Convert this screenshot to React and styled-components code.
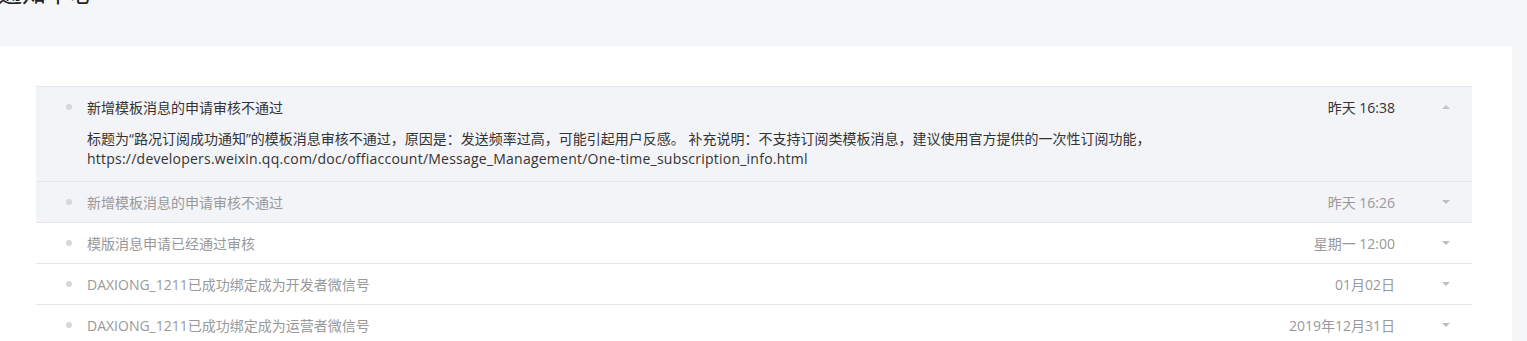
import React from "react";
import styled, { createGlobalStyle } from "styled-components";

const GlobalStyle = createGlobalStyle`
  html, body { margin: 0; padding: 0; background: #f5f6f8; }
  body {
    font-family: "Open Sans", "Noto Sans CJK SC", sans-serif;
    overflow: hidden;
  }
`;

const Page = styled.div`
  width: 1527px;
  height: 341px;
  overflow: hidden;
  box-sizing: border-box;
  padding-right: 15px;
`;

const Title = styled.h1`
  margin: -23px 0 0 -2px;
  height: 69px;
  font-size: 24px;
  line-height: 32px;
  font-weight: 400;
  color: #222;
`;

const Card = styled.div`
  background: #fff;
  padding: 40px 40px 40px 36px;
  min-height: 300px;
`;

const List = styled.ul`
  list-style: none;
  margin: 0;
  padding: 0;
`;

const Item = styled.li`
  border-top: 1px solid #e4e6eb;
  background: ${(p) => (p.$highlight ? "#f3f4f8" : "#fff")};
`;

const Header = styled.div`
  display: flex;
  align-items: center;
  height: 40px;
  padding-left: 30px;
  font-size: 14px;
  color: ${(p) => (p.$open ? "#333" : "#999")};
`;

const Dot = styled.span`
  width: 6px;
  height: 6px;
  border-radius: 50%;
  background: #d8d8d8;
  margin-right: 15px;
  flex: none;
`;

const ItemTitle = styled.span`
  flex: 1;
  white-space: nowrap;
`;

const Time = styled.span`
  margin-right: 25px;
  white-space: nowrap;
`;

const Caret = styled.span`
  width: 52px;
  display: flex;
  justify-content: center;
  align-items: center;
  &::before {
    content: "";
    width: 0;
    height: 0;
    border-left: 4px solid transparent;
    border-right: 4px solid transparent;
    ${(p) =>
      p.$up
        ? "border-bottom: 4px solid #c4c4c4;"
        : "border-top: 4px solid #bdbdbd;"}
  }
`;

const Body = styled.div`
  padding: 2px 40px 12px 87px;
  margin-left: -36px;
  font-size: 14px;
  line-height: 20px;
  color: #333;
`;

const Link = styled.div`
  letter-spacing: 0.23px;
`;

const items = [
  {
    title: "新增模板消息的申请审核不通过",
    time: "昨天 16:38",
    open: true,
    highlight: true,
    text: "标题为“路况订阅成功通知”的模板消息审核不通过，原因是：发送频率过高，可能引起用户反感。 补充说明：不支持订阅类模板消息，建议使用官方提供的一次性订阅功能，",
    url: "https://developers.weixin.qq.com/doc/offiaccount/Message_Management/One-time_subscription_info.html",
  },
  { title: "新增模板消息的申请审核不通过", time: "昨天 16:26", highlight: true },
  { title: "模版消息申请已经通过审核", time: "星期一 12:00" },
  { title: "DAXIONG_1211已成功绑定成为开发者微信号", time: "01月02日" },
  { title: "DAXIONG_1211已成功绑定成为运营者微信号", time: "2019年12月31日" },
];

export default function App() {
  return (
    <Page>
      <GlobalStyle />
      <Title>通知中心</Title>
      <Card>
        <List>
          {items.map((it, i) => (
            <Item key={i} $highlight={it.highlight}>
              <Header $open={it.open}>
                <Dot />
                <ItemTitle>{it.title}</ItemTitle>
                <Time>{it.time}</Time>
                <Caret $up={it.open} />
              </Header>
              {it.open && (
                <Body>
                  <div>{it.text}</div>
                  <Link>{it.url}</Link>
                </Body>
              )}
            </Item>
          ))}
        </List>
      </Card>
    </Page>
  );
}
